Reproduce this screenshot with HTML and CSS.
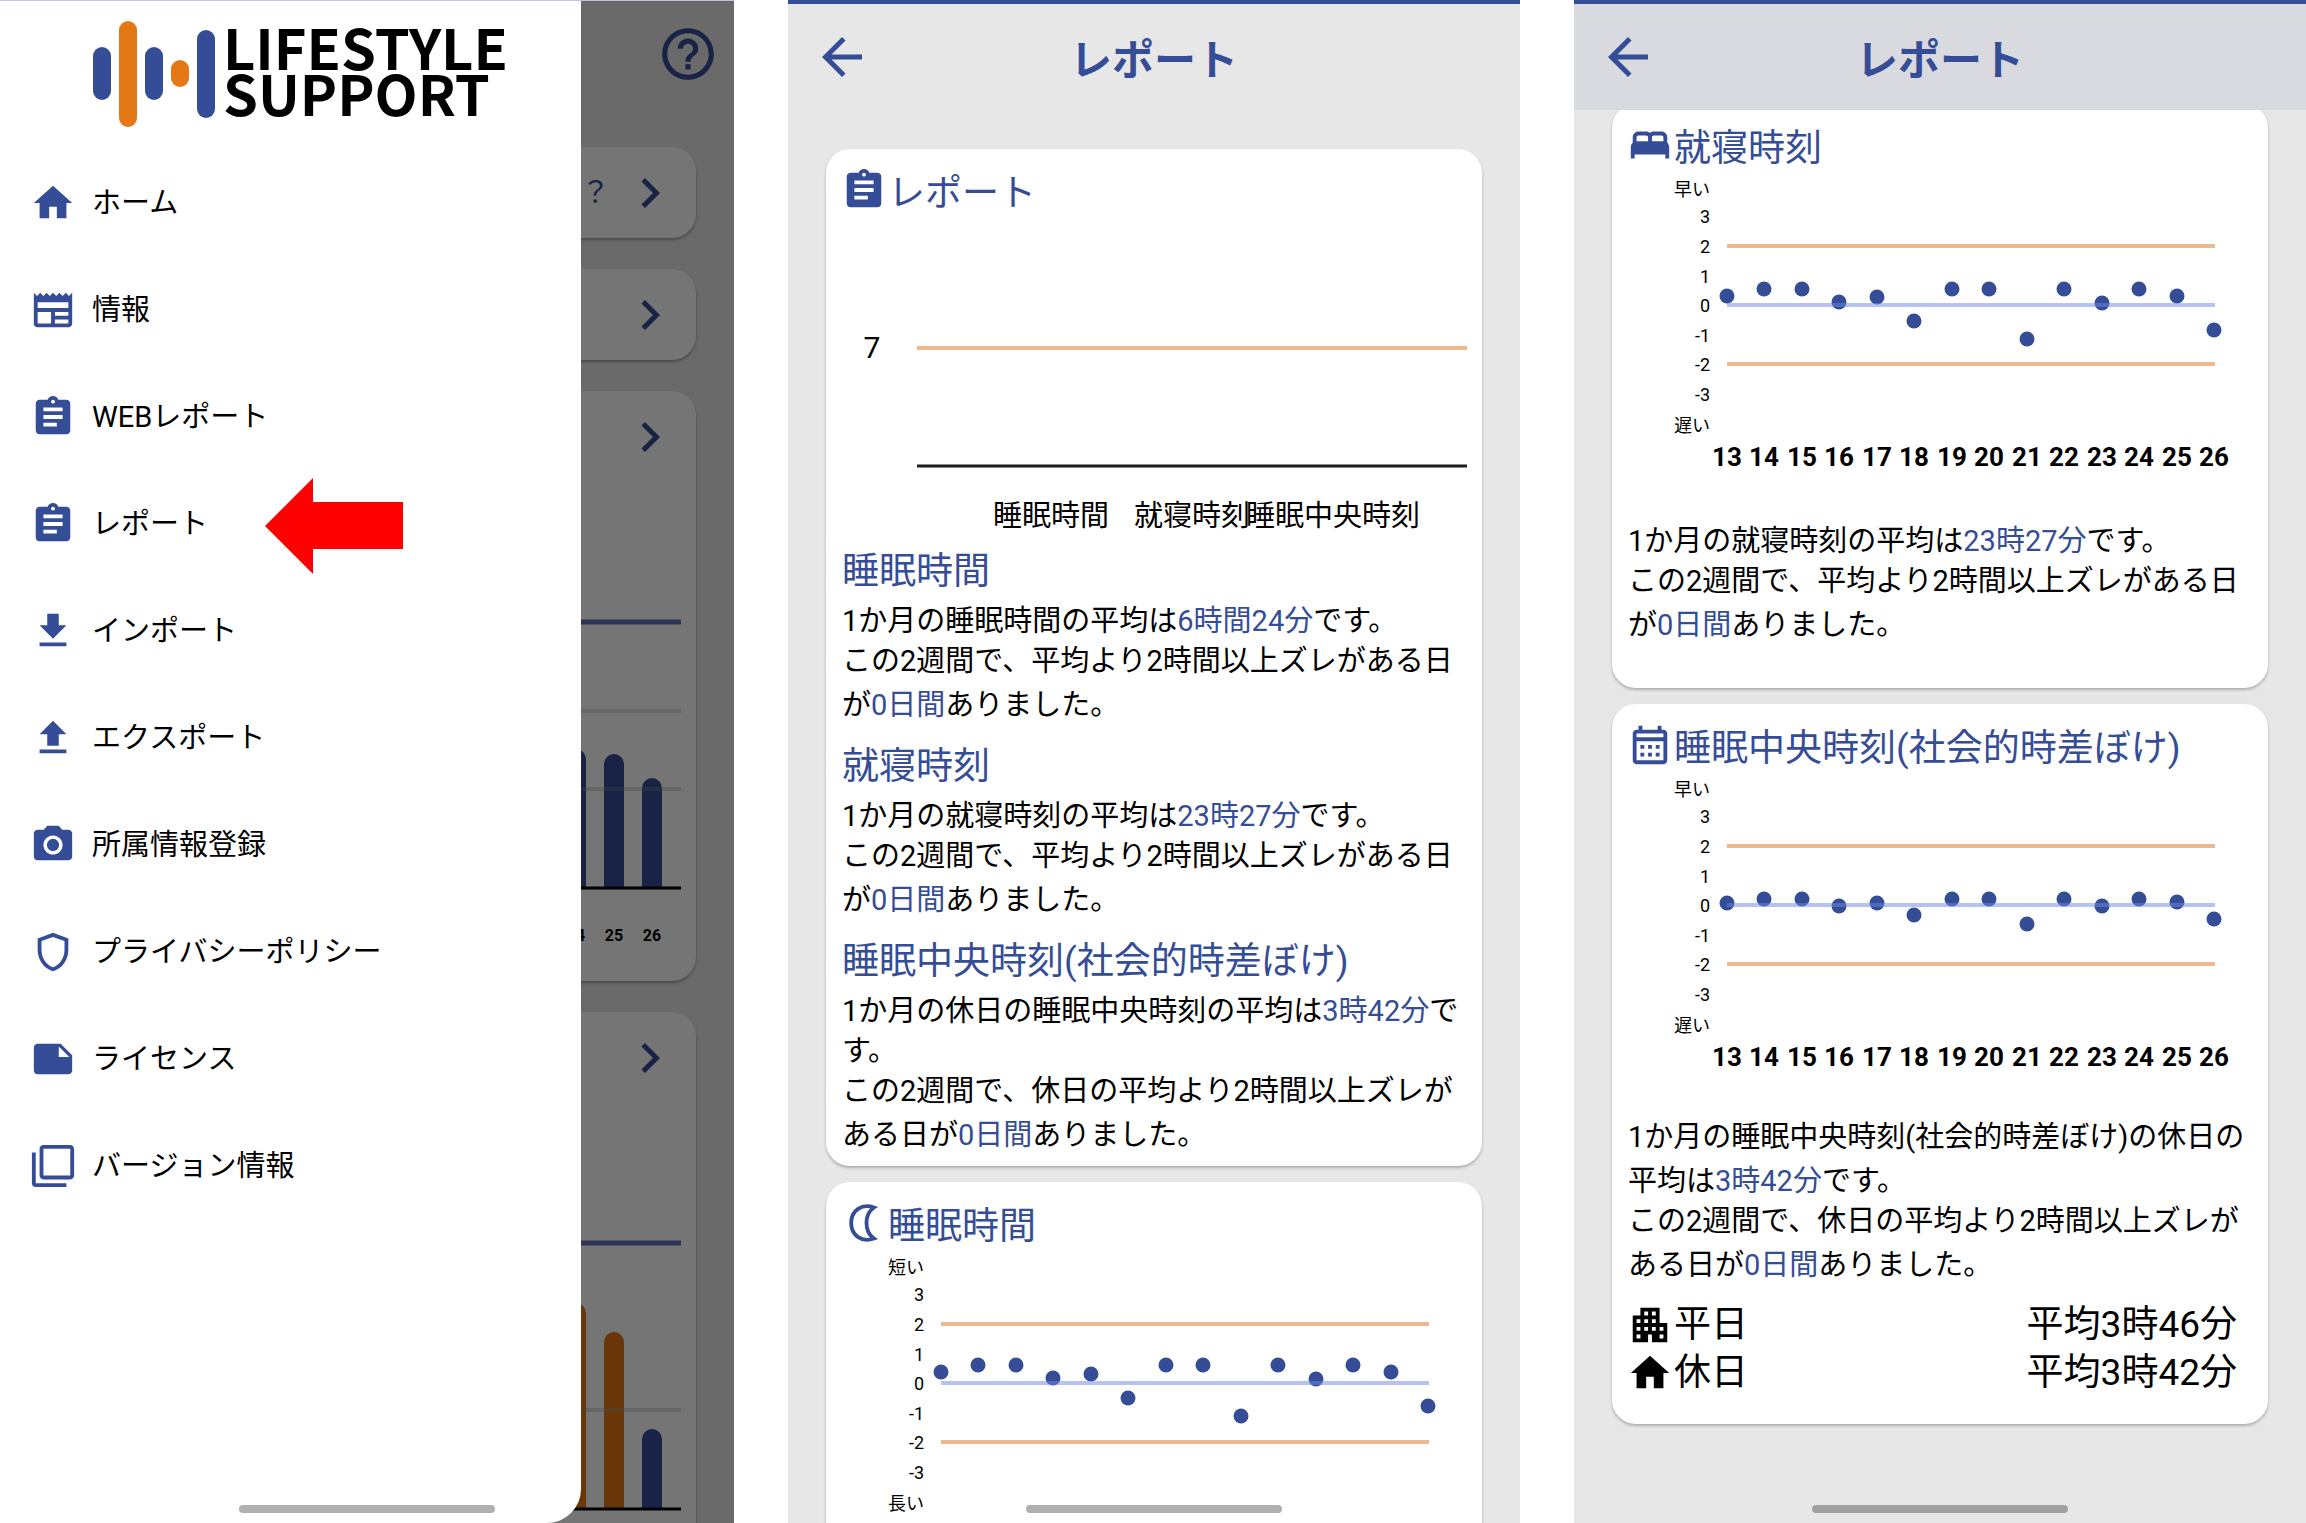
FILE: index.html
```html
<!DOCTYPE html>
<html lang="ja">
<head>
<meta charset="utf-8">
<title>LIFESTYLE SUPPORT</title>
<meta name="viewport" content="width=device-width, initial-scale=1">
<link rel="stylesheet" href="styles.css">
</head>
<body>
<svg class="defs" aria-hidden="true">
  <symbol id="i-home" viewBox="0 0 24 24"><path d="M10 20v-6h4v6h5v-8h3L12 3 2 12h3v8z"/></symbol>
  <symbol id="i-news" viewBox="0 0 24 24"><path d="M22 3l-1.67 1.67L18.67 3 17 4.67 15.33 3l-1.66 1.67L12 3l-1.67 1.67L8.67 3 7 4.67 5.33 3 3.67 4.67 2 3v16c0 1.1.9 2 2 2h16c1.1 0 2-.9 2-2V3zM11 19H4v-6h7v6zm9 0h-7v-2h7v2zm0-4h-7v-2h7v2zm0-4H4V8h16v3z"/></symbol>
  <symbol id="i-report" viewBox="0 0 24 24"><path d="M19 3h-4.18C14.4 1.84 13.3 1 12 1c-1.3 0-2.4.84-2.82 2H5c-1.1 0-2 .9-2 2v14c0 1.1.9 2 2 2h14c1.1 0 2-.9 2-2V5c0-1.1-.9-2-2-2zm-7 0c.55 0 1 .45 1 1s-.45 1-1 1-1-.45-1-1 .45-1 1-1zm2 14H7v-2h7v2zm3-4H7v-2h10v2zm0-4H7V7h10v2z"/></symbol>
  <symbol id="i-import" viewBox="0 0 24 24"><path d="M19 9h-4V3H9v6H5l7 7 7-7zM5 18v2h14v-2H5z"/></symbol>
  <symbol id="i-export" viewBox="0 0 24 24"><path d="M9 16h6v-6h4l-7-7-7 7h4zm-4 2h14v2H5z"/></symbol>
  <symbol id="i-camera" viewBox="0 0 24 24"><circle cx="12" cy="12" r="3.2"/><path d="M9 2L7.17 4H4c-1.1 0-2 .9-2 2v12c0 1.1.9 2 2 2h16c1.1 0 2-.9 2-2V6c0-1.1-.9-2-2-2h-3.17L15 2H9zm3 15c-2.76 0-5-2.24-5-5s2.24-5 5-5 5 2.24 5 5-2.24 5-5 5z"/></symbol>
  <symbol id="i-shield" viewBox="0 0 24 24"><path d="M12 2L4 5v6.09c0 5.05 3.41 9.76 8 10.91 4.59-1.15 8-5.86 8-10.91V5l-8-3zm6 9.09c0 4-2.55 7.7-6 8.83-3.45-1.13-6-4.82-6-8.83V6.31l6-2.12 6 2.12v4.78z"/></symbol>
  <symbol id="i-note" viewBox="0 0 24 24"><path d="M22 10l-6-6H4c-1.1 0-2 .9-2 2v12.01c0 1.1.9 1.99 2 1.99l16-.01c1.1 0 2-.89 2-1.99v-8zm-7-4.5l5.5 5.5H15V5.5z"/></symbol>
  <symbol id="i-version" viewBox="0 0 24 24"><path d="M3 5H1v16c0 1.1.9 2 2 2h16v-2H3V5zm18-4H7c-1.1 0-2 .9-2 2v14c0 1.1.9 2 2 2h14c1.1 0 2-.9 2-2V3c0-1.1-.9-2-2-2zm0 16H7V3h14v14z"/></symbol>
  <symbol id="i-help" viewBox="0 0 24 24"><path d="M11 18h2v-2h-2v2zm1-16C6.48 2 2 6.48 2 12s4.48 10 10 10 10-4.48 10-10S17.52 2 12 2zm0 18c-4.41 0-8-3.59-8-8s3.59-8 8-8 8 3.59 8 8-3.59 8-8 8zm0-14c-2.21 0-4 1.79-4 4h2c0-1.1.9-2 2-2s2 .9 2 2c0 2-3 1.75-3 5h2c0-2.25 3-2.5 3-5 0-2.21-1.79-4-4-4z"/></symbol>
  <symbol id="i-chevron" viewBox="0 0 24 24"><path d="M10 6L8.59 7.41 13.17 12l-4.58 4.59L10 18l6-6z"/></symbol>
  <symbol id="i-back" viewBox="0 0 24 24"><path d="M20 11H7.83l5.59-5.59L12 4l-8 8 8 8 1.41-1.41L7.83 13H20v-2z"/></symbol>
  <symbol id="i-moon" viewBox="0 0 24 24"><path d="M17.2 3.9C11 1.6 5.3 5.5 5.3 12s5.7 10.4 11.9 8.1C14.4 18.2 13.3 15.2 13.3 12s1.1-6.2 3.9-8.1z" fill="none" stroke="currentColor" stroke-width="2"/></symbol>
  <symbol id="i-bed" viewBox="0 0 24 24"><path d="M21 10.78V8c0-1.65-1.35-3-3-3h-4c-.77 0-1.47.3-2 .78-.53-.48-1.23-.78-2-.78H6C4.35 5 3 6.35 3 8v2.78c-.61.55-1 1.34-1 2.22v6h2v-2h16v2h2v-6c0-.88-.39-1.67-1-2.22zM14 7h4c.55 0 1 .45 1 1v2h-6V8c0-.55.45-1 1-1zM5 8c0-.55.45-1 1-1h4c.55 0 1 .45 1 1v2H5V8z"/></symbol>
  <symbol id="i-calendar" viewBox="0 0 24 24"><path d="M19 4h-1V2h-2v2H8V2H6v2H5c-1.11 0-2 .9-2 2v14c0 1.1.89 2 2 2h14c1.1 0 2-.9 2-2V6c0-1.1-.9-2-2-2zm0 16H5V10h14v10zm0-12H5V6h14v2zM7 12h2v2H7zm4 0h2v2h-2zm4 0h2v2h-2zM7 16h2v2H7zm4 0h2v2h-2zm4 0h2v2h-2z"/></symbol>
  <symbol id="i-office" viewBox="0 0 24 24"><path d="M17 11V3H7v4H3v14h8v-4h2v4h8V11h-4zM7 19H5v-2h2v2zm0-4H5v-2h2v2zm0-4H5V9h2v2zm4 4H9v-2h2v2zm0-4H9V9h2v2zm0-4H9V5h2v2zm4 8h-2v-2h2v2zm0-4h-2V9h2v2zm0-4h-2V5h2v2zm4 12h-2v-2h2v2zm0-4h-2v-2h2v2z"/></symbol>
</svg>

<div class="board">

  <section class="screen home">
    <div class="home-body">
      <div class="home-top"><button class="icon-btn" aria-label="ヘルプ"><svg class="icon-help"><use href="#i-help"/></svg></button></div>
      <div class="tile"><div class="tile-head"><span>？</span><svg class="chevron"><use href="#i-chevron"/></svg></div></div>
      <div class="tile"><div class="tile-head"><svg class="chevron"><use href="#i-chevron"/></svg></div></div>
      <div class="tile">
        <div class="tile-head"><svg class="chevron"><use href="#i-chevron"/></svg></div>
        <svg class="bars" viewBox="0 0 640 499">
          <g class="bar-blue"><path d="M525 406V277a10 10 0 0 1 20 0V406zM563 406V282a10 10 0 0 1 20 0V406zM601 406V306a10 10 0 0 1 20 0V406z"/></g>
          <path class="grid-line" d="M400 229H640M400 307H640"/>
          <path class="goal-line" d="M400 140H640"/>
          <path class="base-line" d="M400 406H640"/>
          <g class="bar-label" text-anchor="middle"><text x="535" y="459">24</text><text x="573" y="459">25</text><text x="611" y="459">26</text></g>
        </svg>
      </div>
      <div class="tile">
        <div class="tile-head"><svg class="chevron"><use href="#i-chevron"/></svg></div>
        <svg class="bars" viewBox="0 0 640 499">
          <g class="bar-orange"><path d="M525 406V210a10 10 0 0 1 20 0V406zM563 406V239a10 10 0 0 1 20 0V406z"/></g>
          <g class="bar-blue"><path d="M601 406V336a10 10 0 0 1 20 0V406z"/></g>
          <path class="grid-line" d="M400 307H640"/>
          <path class="goal-line" d="M400 140H640"/>
          <path class="base-line" d="M400 406H640"/>
        </svg>
      </div>
    </div>
    <div class="scrim"></div>
    <aside class="drawer">
      <div class="logo">
        <svg class="logo-mark" viewBox="0 0 122 106" aria-hidden="true">
          <g fill="#354d96"><rect x="0" y="26" width="18" height="53" rx="9"/><rect x="52" y="26" width="18" height="53" rx="9"/><rect x="104" y="9" width="18" height="88" rx="9"/></g>
          <g fill="#e47814"><rect x="26" y="0" width="18" height="106" rx="9"/><rect x="78" y="39" width="18" height="27" rx="9"/></g>
        </svg>
        <div class="logo-text">LIFESTYLE<br>SUPPORT</div>
      </div>
      <nav class="menu">
        <a href="#"><svg class="icon"><use href="#i-home"/></svg>ホーム</a>
        <a href="#"><svg class="icon"><use href="#i-news"/></svg>情報</a>
        <a href="#"><svg class="icon"><use href="#i-report"/></svg>WEBレポート</a>
        <a href="#"><svg class="icon"><use href="#i-report"/></svg>レポート<svg class="pointer" viewBox="0 -4 138 100" aria-hidden="true"><path d="M0 48L48 0V24H138V71H48V96z"/></svg></a>
        <a href="#"><svg class="icon"><use href="#i-import"/></svg>インポート</a>
        <a href="#"><svg class="icon"><use href="#i-export"/></svg>エクスポート</a>
        <a href="#"><svg class="icon"><use href="#i-camera"/></svg>所属情報登録</a>
        <a href="#"><svg class="icon"><use href="#i-shield"/></svg>プライバシーポリシー</a>
        <a href="#"><svg class="icon"><use href="#i-note"/></svg>ライセンス</a>
        <a href="#"><svg class="icon"><use href="#i-version"/></svg>バージョン情報</a>
      </nav>
    </aside>
    <div class="home-bar"></div>
  </section>

  <section class="screen report">
    <header class="app-bar"><button class="icon-btn" aria-label="戻る"><svg class="icon-back"><use href="#i-back"/></svg></button><h1>レポート</h1></header>
    <main class="cards">
      <article class="card">
        <h2><svg class="icon"><use href="#i-report"/></svg>レポート</h2>
        <svg class="chart" viewBox="0 0 656 334">
          <text class="goal" x="46" y="145" text-anchor="middle">7</text>
          <path class="limit" d="M91 135H641"/>
          <path class="axis" d="M91 253H641"/>
          <g class="category" text-anchor="middle"><text x="225" y="313">睡眠時間</text><text x="366" y="313">就寝時刻</text><text x="507" y="313">睡眠中央時刻</text></g>
        </svg>
        <div class="note">
          <h3>睡眠時間</h3>
          <p>1か月の睡眠時間の平均は<span class="value">6時間24分</span>です。</p>
          <p>この2週間で、平均より2時間以上ズレがある日が<span class="value">0日間</span>ありました。</p>
        </div>
        <div class="note">
          <h3>就寝時刻</h3>
          <p>1か月の就寝時刻の平均は<span class="value">23時27分</span>です。</p>
          <p>この2週間で、平均より2時間以上ズレがある日が<span class="value">0日間</span>ありました。</p>
        </div>
        <div class="note">
          <h3>睡眠中央時刻(社会的時差ぼけ)</h3>
          <p>1か月の休日の睡眠中央時刻の平均は<span class="value">3時42分</span>です。</p>
          <p>この2週間で、休日の平均より2時間以上ズレがある日が<span class="value">0日間</span>ありました。</p>
        </div>
      </article>
      <article class="card">
        <h2><svg class="icon"><use href="#i-moon"/></svg>睡眠時間</h2>
        <svg class="chart" viewBox="0 0 656 348">
          <g class="tick" text-anchor="end"><text x="98" y="28">短い</text><text x="98" y="55">3</text><text x="98" y="85">2</text><text x="98" y="115">1</text><text x="98" y="144">0</text><text x="98" y="174">-1</text><text x="98" y="203">-2</text><text x="98" y="233">-3</text><text x="98" y="264">長い</text></g>
          <path class="limit" d="M115 78H603M115 196H603"/>
          <g class="dots"><circle cx="115" cy="126" r="7.5"/><circle cx="152" cy="119" r="7.5"/><circle cx="190" cy="119" r="7.5"/><circle cx="227" cy="132" r="7.5"/><circle cx="265" cy="128" r="7.5"/><circle cx="302" cy="152" r="7.5"/><circle cx="340" cy="119" r="7.5"/><circle cx="377" cy="119" r="7.5"/><circle cx="415" cy="170" r="7.5"/><circle cx="452" cy="119" r="7.5"/><circle cx="490" cy="133" r="7.5"/><circle cx="527" cy="119" r="7.5"/><circle cx="565" cy="126" r="7.5"/><circle cx="602" cy="160" r="7.5"/></g>
          <path class="zero" d="M115 137H603"/>
        </svg>
      </article>
    </main>
    <div class="home-bar"></div>
  </section>

  <section class="screen report scrolled">
    <header class="app-bar"><button class="icon-btn" aria-label="戻る"><svg class="icon-back"><use href="#i-back"/></svg></button><h1>レポート</h1></header>
    <main class="cards">
      <article class="card roomy">
        <h2><svg class="icon"><use href="#i-bed"/></svg>就寝時刻</h2>
        <svg class="chart" viewBox="0 0 656 348">
          <g class="tick" text-anchor="end"><text x="98" y="28">早い</text><text x="98" y="55">3</text><text x="98" y="85">2</text><text x="98" y="115">1</text><text x="98" y="144">0</text><text x="98" y="174">-1</text><text x="98" y="203">-2</text><text x="98" y="233">-3</text><text x="98" y="264">遅い</text></g>
          <path class="limit" d="M115 78H603M115 196H603"/>
          <g class="dots"><circle cx="115" cy="128" r="7.5"/><circle cx="152" cy="121" r="7.5"/><circle cx="190" cy="121" r="7.5"/><circle cx="227" cy="134" r="7.5"/><circle cx="265" cy="129" r="7.5"/><circle cx="302" cy="153" r="7.5"/><circle cx="340" cy="121" r="7.5"/><circle cx="377" cy="121" r="7.5"/><circle cx="415" cy="171" r="7.5"/><circle cx="452" cy="121" r="7.5"/><circle cx="490" cy="135" r="7.5"/><circle cx="527" cy="121" r="7.5"/><circle cx="565" cy="128" r="7.5"/><circle cx="602" cy="162" r="7.5"/></g>
          <path class="zero" d="M115 137H603"/>
          <g class="day" text-anchor="middle"><text x="115" y="298">13</text><text x="152" y="298">14</text><text x="190" y="298">15</text><text x="227" y="298">16</text><text x="265" y="298">17</text><text x="302" y="298">18</text><text x="340" y="298">19</text><text x="377" y="298">20</text><text x="415" y="298">21</text><text x="452" y="298">22</text><text x="490" y="298">23</text><text x="527" y="298">24</text><text x="565" y="298">25</text><text x="602" y="298">26</text></g>
        </svg>
        <div class="note">
          <p>1か月の就寝時刻の平均は<span class="value">23時27分</span>です。</p>
          <p>この2週間で、平均より2時間以上ズレがある日が<span class="value">0日間</span>ありました。</p>
        </div>
      </article>
      <article class="card">
        <h2><svg class="icon"><use href="#i-calendar"/></svg>睡眠中央時刻(社会的時差ぼけ)</h2>
        <svg class="chart" viewBox="0 0 656 348">
          <g class="tick" text-anchor="end"><text x="98" y="28">早い</text><text x="98" y="55">3</text><text x="98" y="85">2</text><text x="98" y="115">1</text><text x="98" y="144">0</text><text x="98" y="174">-1</text><text x="98" y="203">-2</text><text x="98" y="233">-3</text><text x="98" y="264">遅い</text></g>
          <path class="limit" d="M115 78H603M115 196H603"/>
          <g class="dots"><circle cx="115" cy="135" r="7.5"/><circle cx="152" cy="131" r="7.5"/><circle cx="190" cy="131" r="7.5"/><circle cx="227" cy="138" r="7.5"/><circle cx="265" cy="135" r="7.5"/><circle cx="302" cy="147" r="7.5"/><circle cx="340" cy="131" r="7.5"/><circle cx="377" cy="131" r="7.5"/><circle cx="415" cy="156" r="7.5"/><circle cx="452" cy="131" r="7.5"/><circle cx="490" cy="138" r="7.5"/><circle cx="527" cy="131" r="7.5"/><circle cx="565" cy="134" r="7.5"/><circle cx="602" cy="151" r="7.5"/></g>
          <path class="zero" d="M115 137H603"/>
          <g class="day" text-anchor="middle"><text x="115" y="298">13</text><text x="152" y="298">14</text><text x="190" y="298">15</text><text x="227" y="298">16</text><text x="265" y="298">17</text><text x="302" y="298">18</text><text x="340" y="298">19</text><text x="377" y="298">20</text><text x="415" y="298">21</text><text x="452" y="298">22</text><text x="490" y="298">23</text><text x="527" y="298">24</text><text x="565" y="298">25</text><text x="602" y="298">26</text></g>
        </svg>
        <div class="note">
          <p>1か月の睡眠中央時刻(社会的時差ぼけ)の休日の平均は<span class="value">3時42分</span>です。</p>
          <p>この2週間で、休日の平均より2時間以上ズレがある日が<span class="value">0日間</span>ありました。</p>
        </div>
        <dl class="averages">
          <div><dt><svg class="icon"><use href="#i-office"/></svg>平日</dt><dd>平均3時46分</dd></div>
          <div><dt><svg class="icon"><use href="#i-home"/></svg>休日</dt><dd>平均3時42分</dd></div>
        </dl>
      </article>
    </main>
    <div class="home-bar"></div>
  </section>

</div>
</body>
</html>
```
FILE: styles.css
```css
:root {
  --blue: #354d96;
  --orange: #e47814;
  --page: #e7e7e7;
}

* { box-sizing: border-box; }

body {
  margin: 0;
  background: #fff;
  color: #000;
  font: 400 29px/40px Roboto, "Noto Sans CJK JP", sans-serif;
}

h1, h2, h3, p, dl, dd { margin: 0; font-weight: 400; }
svg { display: block; flex: none; fill: currentColor; }
.defs { position: absolute; width: 0; height: 0; }

.board {
  display: grid;
  grid-template-columns: 734fr 732fr 732fr;
  gap: 54px;
  height: 100vh;
}

.screen {
  position: relative;
  min-width: 0;
  overflow: hidden;
  background: var(--page);
}

.home-bar {
  position: absolute;
  bottom: 10px;
  left: 50%;
  z-index: 3;
  width: 256px;
  height: 8px;
  margin-left: -128px;
  border-radius: 4px;
  background: #b0b0b0;
}
.scrolled .home-bar { background: #a0a0a0; }

.icon { width: 46px; height: 46px; }
.icon-btn { padding: 0; border: 0; background: none; color: var(--blue); }

/* Home screen with the drawer open */
.home { border-top: 1px solid #bcc7d8; }
.home-body {
  display: flex;
  flex-direction: column;
  gap: 31px;
  padding: 0 38px 0 32px;
  color: var(--blue);
}
.home-top {
  display: flex;
  align-items: flex-start;
  justify-content: flex-end;
  height: 115px;
  padding-top: 22px;
  margin-right: -23px;
}
.icon-help { width: 62px; height: 62px; }
.tile {
  flex: none;
  border-radius: 24px;
  background: #fff;
  box-shadow: 0 2px 3px rgba(0, 0, 0, .3);
}
.tile-head {
  display: flex;
  align-items: center;
  justify-content: flex-end;
  gap: 10px;
  height: 91px;
  padding-right: 16px;
}
.chevron { width: 60px; height: 60px; }
.bars { width: 640px; height: 499px; margin: 0 15px 0 auto; }
.bar-blue { fill: var(--blue); }
.bar-orange { fill: var(--orange); }
.grid-line { stroke: rgba(150, 150, 150, .3); stroke-width: 4; }
.goal-line { stroke: #5f71b8; stroke-width: 5; }
.base-line { stroke: #000; stroke-width: 3; }
.bar-label { fill: #000; font-size: 16px; font-weight: 700; }

.scrim { position: absolute; inset: 0; background: rgba(0, 0, 0, .54); }
.drawer {
  position: absolute;
  inset: 0 20.8% 0 0;
  z-index: 2;
  border-radius: 0 0 34px 0;
  background: #fff;
}
.logo {
  display: flex;
  gap: 8px;
  padding: 20px 0 0 93px;
}
.logo-mark { width: 122px; height: 106px; }
.logo-text {
  font: 700 56px/46px "Noto Sans CJK JP", sans-serif;
  padding-top: 2px;
}
.menu { display: grid; grid-auto-rows: 107px; padding-top: 22px; }
.menu a {
  display: flex;
  align-items: center;
  gap: 16px;
  padding-left: 30px;
  color: #000;
  text-decoration: none;
}
.menu .icon { color: var(--blue); }
.pointer { width: 138px; height: 100px; margin-left: 41px; fill: #f00; }

/* Report screens */
.app-bar {
  position: relative;
  z-index: 1;
  display: grid;
  grid-template-columns: 60px 1fr 60px;
  align-items: center;
  height: 110px;
  padding: 0 24px;
  border-top: 4px solid var(--blue);
  background: var(--page);
  color: var(--blue);
}
.scrolled .app-bar { background: #d9dae0; }
.icon-back { width: 60px; height: 60px; }
.app-bar h1 { padding-top: 8px; font-size: 42px; font-weight: 700; text-align: center; }

.cards {
  display: flex;
  flex-direction: column;
  gap: 16px;
  padding: 39px 38px 0;
}
.scrolled .cards { margin-top: -6px; padding-top: 0; }

.card {
  flex: none;
  padding: 16px 0 11px;
  border-radius: 24px;
  background: #fff;
  box-shadow: 0 2px 3px rgba(0, 0, 0, .25);
}
.card.roomy { padding-bottom: 43px; }
.scrolled .card:last-child { padding-bottom: 27px; }
.card h2 {
  display: flex;
  align-items: flex-start;
  gap: 1px;
  height: 48px;
  padding: 2px 0 0 15px;
  color: var(--blue);
  font-size: 37px;
  line-height: 54px;
}

.chart { width: 100%; height: auto; }
.limit { fill: none; stroke: #efb98f; stroke-width: 4; }
.zero { stroke: rgba(110, 136, 230, .5); stroke-width: 4; }
.axis { stroke: #1c1c1c; stroke-width: 3; }
.dots { fill: var(--blue); }
.tick { font-size: 18px; }
.day { font-size: 26px; font-weight: 700; }
.goal { font-size: 30px; }

.note { padding: 0 16px; }
.note + .note { margin-top: 17px; }
.note h3 { color: var(--blue); font-size: 37px; line-height: 50px; }
.value { display: inline-block; padding-top: 4px; color: var(--blue); }

.scrolled .note { padding-top: 1px; }

.averages { padding: 16px 31px 0 15px; font-size: 37px; }
.averages div {
  display: flex;
  align-items: center;
  justify-content: space-between;
  height: 48px;
}
.averages dt { display: flex; align-items: center; gap: 1px; }
```
